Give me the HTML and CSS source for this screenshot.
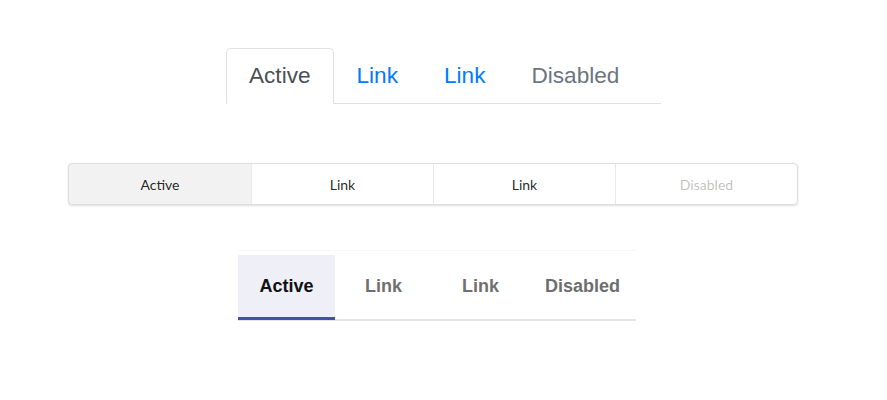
FILE: index.html
```html
<!DOCTYPE html>
<html>
<head>
<meta charset="utf-8">
<link rel="stylesheet" href="styles.css">
</head>
<body>
<div class="page">
  <ul class="bs-tabs">
    <li><a class="bs-link active">Active</a></li>
    <li><a class="bs-link">Link</a></li>
    <li><a class="bs-link">Link</a></li>
    <li><a class="bs-link disabled">Disabled</a></li>
  </ul>

  <div class="seg-menu">
    <a class="seg-item active">Active</a>
    <a class="seg-item">Link</a>
    <a class="seg-item">Link</a>
    <a class="seg-item disabled">Disabled</a>
  </div>

  <div class="mat-wrap">
    <div class="mat-tabs">
      <a class="mat-tab active">Active</a>
      <a class="mat-tab">Link</a>
      <a class="mat-tab">Link</a>
      <a class="mat-tab disabled">Disabled</a>
    </div>
  </div>
</div>
</body>
</html>
```

FILE: styles.css
```css
html, body {
  margin: 0;
  padding: 0;
  background: #fff;
}

.page {
  width: 887px;
  height: 400px;
  padding-top: 48px;
  box-sizing: border-box;
}

/* Group 1: bootstrap-like tabs */
.bs-tabs {
  list-style: none;
  margin: 0 0 0 226px;
  padding: 0;
  width: 435px;
  display: flex;
  border-bottom: 1px solid #dee2e6;
  font-family: "Liberation Sans", Arial, sans-serif;
  font-size: 22.6px;
}
.bs-tabs li {
  margin-bottom: -1px;
}
.bs-link {
  display: block;
  padding: 14px 22px 14px 22px;
  line-height: 26px;
  border: 1px solid transparent;
  border-top-left-radius: 5px;
  border-top-right-radius: 5px;
  color: #007bff;
}
.bs-link.active {
  color: #495057;
  background: #fff;
  border-color: #dee2e6 #dee2e6 #fff;
}
.bs-link.disabled {
  color: #6c757d;
}

/* Group 2: segmented menu */
.seg-menu {
  margin: 59px 0 0 68px;
  width: 730px;
  height: 42px;
  box-sizing: border-box;
  display: grid;
  grid-template-columns: repeat(4, 1fr);
  border: 1px solid rgba(34, 36, 38, 0.15);
  border-radius: 4px;
  box-shadow: 0 1px 2px 0 rgba(34, 36, 38, 0.15);
  overflow: hidden;
  font-family: Lato, "Open Sans", sans-serif;
  font-size: 14px;
}
.seg-item {
  display: flex;
  align-items: center;
  justify-content: center;
  color: rgba(0, 0, 0, 0.87);
  border-left: 1px solid rgba(34, 36, 38, 0.1);
}
.seg-item:first-child {
  border-left: none;
}
.seg-item.active {
  background: rgba(0, 0, 0, 0.05);
}
.seg-item.disabled {
  color: rgba(40, 40, 40, 0.3);
}

/* Group 3: material-like tabs */
.mat-wrap {
  margin: 45px 0 0 237px;
  width: 399px;
  border-top: 1px solid #f6f6f6;
  padding: 4px 0 0 1px;
  box-sizing: border-box;
}
.mat-tabs {
  display: flex;
  border-bottom: 2px solid #e4e4e4;
  font-family: "Liberation Sans", Arial, sans-serif;
  font-size: 18px;
  font-weight: bold;
}
.mat-tab {
  min-width: 97px;
  height: 65px;
  box-sizing: border-box;
  padding: 0 16px;
  display: flex;
  align-items: center;
  justify-content: center;
  color: #707070;
  border-bottom: 3px solid transparent;
  margin-bottom: -1px;
}
.mat-tab.active {
  color: #111;
  background: #efeff8;
  border-bottom-color: #3f51b5;
}
.mat-tab.disabled {
  color: #6e6e6e;
}
```
